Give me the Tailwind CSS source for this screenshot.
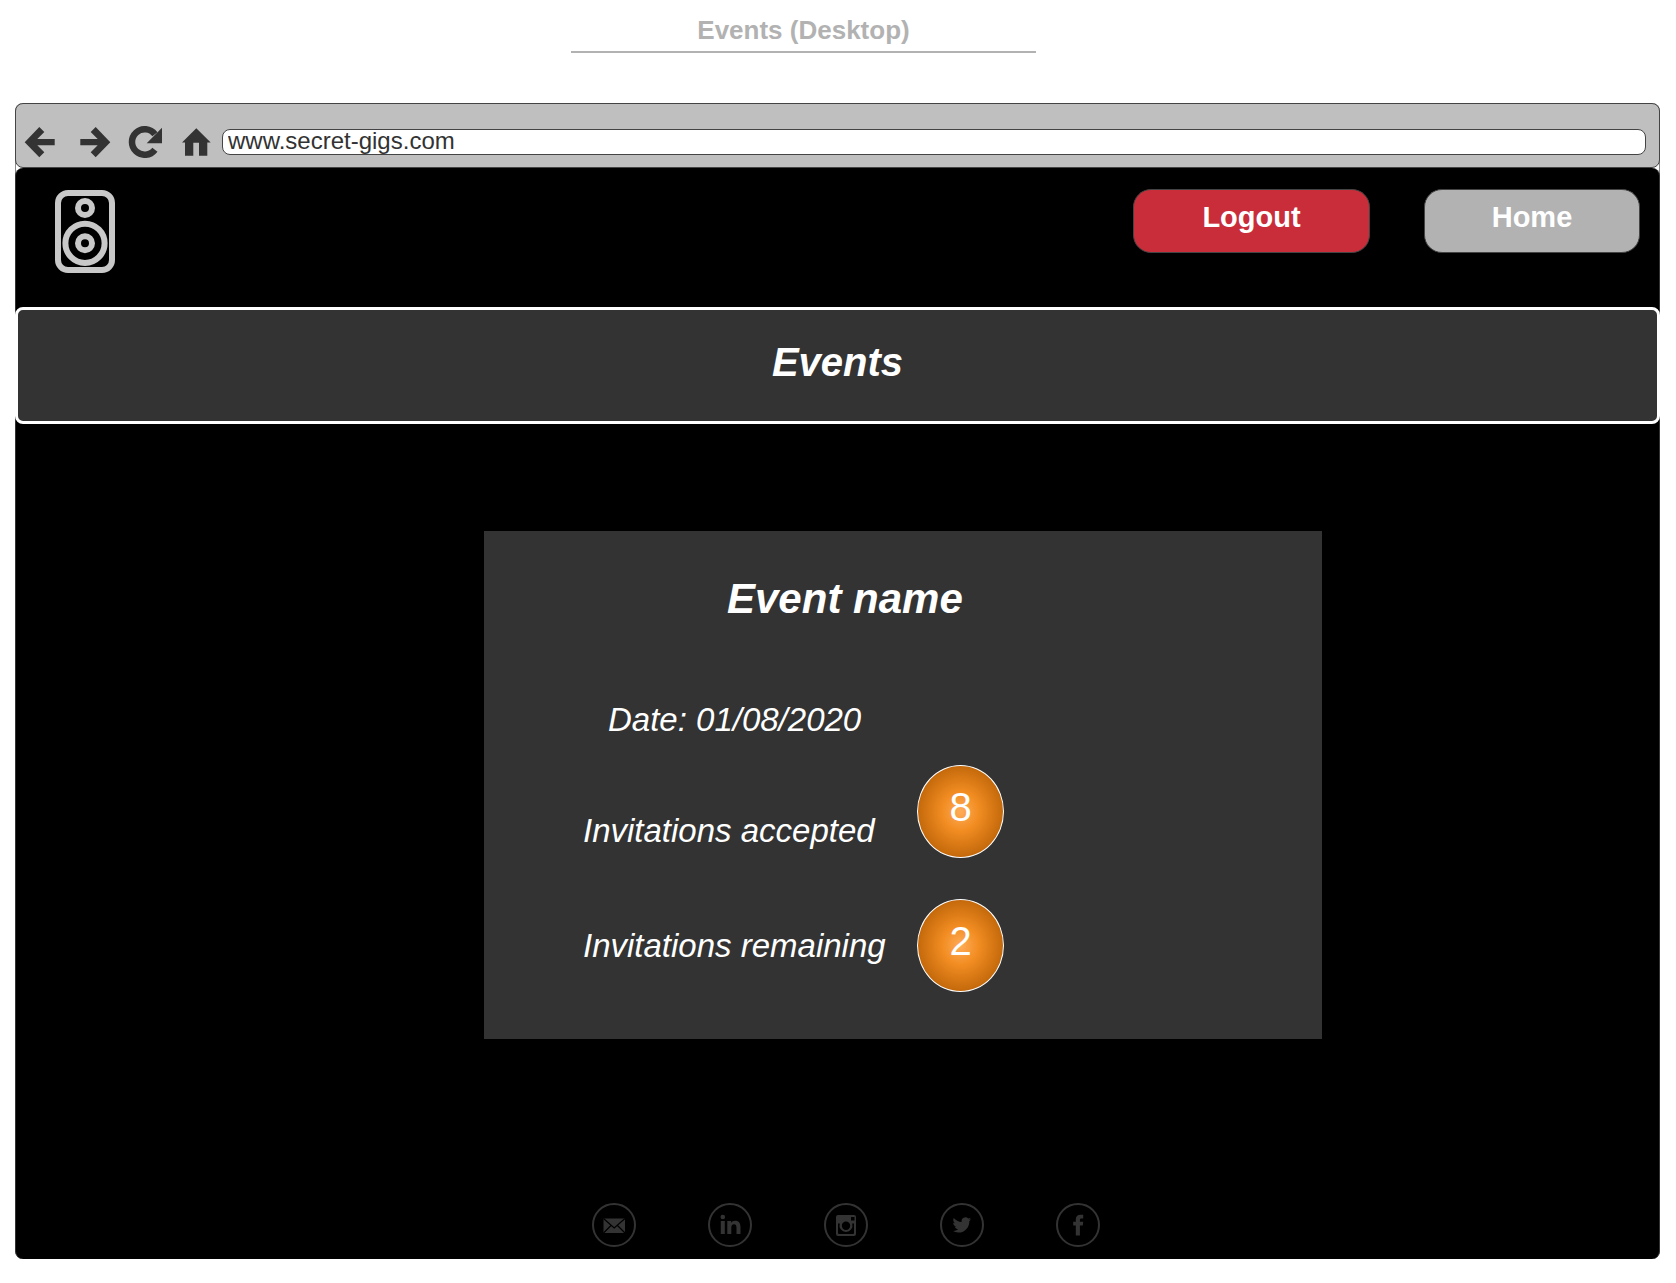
<!DOCTYPE html>
<html lang="en">
<head>
<meta charset="utf-8">
<meta name="viewport" content="width=device-width, initial-scale=1">
<title>Events (Desktop)</title>
<script src="https://cdn.jsdelivr.net/npm/@tailwindcss/browser@4"></script>
</head>
<body class="min-h-screen bg-white pb-[23px] font-['Liberation_Sans',Arial,sans-serif]">
<header class="grid grid-cols-[571fr_465fr_640fr] pt-[14px]">
  <h1 class="col-start-2 border-b-2 border-[#b2b2b2] pb-[5px] text-center text-[26px] leading-8 font-bold whitespace-nowrap text-[#b2b2b2]">Events (Desktop)</h1>
</header>

<div class="mt-[50px] mr-4 ml-[15px] rounded-lg shadow-[inset_1px_0_#888,inset_-1px_0_#888]">
  <!-- Browser toolbar -->
  <div class="flex h-[65px] items-center rounded-lg border border-[#444] bg-[#bfbfbf] pt-[13px] pr-[13px] pl-2 text-[#333]">
    <div class="flex shrink-0 gap-4">
      <button type="button" aria-label="Back"><svg class="block h-8 w-9" viewBox="0 0 36 32" fill="currentColor"><path d="M.7 16.2 15.3 1l5 5-7 7H30.7v6.2H13.3l7 7.1-5 5z"/></svg></button>
      <button type="button" aria-label="Forward"><svg class="block h-8 w-9" viewBox="0 0 36 32" fill="currentColor"><path d="M34.3 16.2 19.7 1l-5 5 7 7H4.3v6.2h17.4l-7 7.1 5 5z"/></svg></button>
      <button type="button" aria-label="Reload"><svg class="block h-8 w-9" viewBox="0 0 36 32" fill="currentColor"><path d="M26.9 8.3A12.75 12.75 0 1 0 26.9 23.7" fill="none" stroke="currentColor" stroke-width="6.5"/><path d="M34 1.7v15.6H18.7z"/></svg></button>
      <button type="button" aria-label="Home page"><svg class="block h-8 w-9" viewBox="0 0 36 32" fill="currentColor"><path d="M16.3 2.3 30.7 16.5h-3.4v13.3H19V16.7h-5.7v13.1H5V16.5H2z"/></svg></button>
    </div>
    <input type="text" aria-label="Address" value="www.secret-gigs.com" class="ml-1.5 h-[26px] min-w-0 flex-1 rounded-lg border border-[#444] bg-white px-[5px] pb-0.5 text-[24px] leading-5 text-[#333] outline-none">
  </div>

  <!-- Page -->
  <div class="rounded-lg border-x border-[#333] bg-black text-white">
    <nav class="flex h-[139px] items-start justify-between pt-[21px] pr-[19px] pl-[39px]">
      <a href="#" aria-label="Secret Gigs" class="pt-px">
        <svg class="block h-[83px] w-[60px]" viewBox="0 0 60 83" fill="none" stroke="#c8c8c8" stroke-width="6"><rect x="3" y="3" width="54" height="77" rx="10"/><circle cx="30" cy="18" r="7"/><circle cx="30" cy="53.3" r="19.6"/><circle cx="30" cy="53.3" r="7"/></svg>
      </a>
      <div class="flex gap-[54px] text-[29px] leading-8 font-bold">
        <button type="button" class="h-16 w-[237px] rounded-[18px] border border-[#444] bg-[#c92d39] pb-2">Logout</button>
        <button type="button" class="h-16 w-[216px] rounded-[18px] border border-[#444] bg-[#b2b2b2] pb-2">Home</button>
      </div>
    </nav>

    <div class="-mx-px flex h-[117px] items-center justify-center rounded-lg border-3 border-white bg-[#333] pb-2">
      <h2 class="text-[40px] leading-12 font-bold italic">Events</h2>
    </div>

    <main class="grid grid-cols-[468fr_838fr_337fr] pt-[107px]">
      <section class="col-start-2 bg-[#333] pt-11 pb-[47px] pl-[99px] whitespace-nowrap">
        <h3 class="pl-[144px] text-[42px] leading-12 font-bold italic">Event name</h3>
        <p class="mt-[77px] pl-[25px] text-[33px] leading-10 italic">Date: 01/08/2020</p>
        <dl class="mt-[25px] flex flex-col gap-[41px]">
          <div class="flex items-end">
            <dt class="w-[334px] pb-[7px] text-[33px] leading-10 italic">Invitations accepted</dt>
            <dd class="flex h-[93px] w-[87px] items-center justify-center rounded-[50%] border border-white bg-[radial-gradient(farthest-side,#ffac59_0%,#f28d22_42%,#c4690b_100%)] pb-[9px] text-[40px] leading-12">8</dd>
          </div>
          <div class="flex items-center">
            <dt class="w-[334px] text-[33px] leading-10 italic">Invitations remaining</dt>
            <dd class="flex h-[93px] w-[87px] items-center justify-center rounded-[50%] border border-white bg-[radial-gradient(farthest-side,#ffac59_0%,#f28d22_42%,#c4690b_100%)] pb-[9px] text-[40px] leading-12">2</dd>
          </div>
        </dl>
      </section>
    </main>

    <footer class="flex justify-center gap-[72px] pt-[164px] pb-3 pl-4 text-[#333]">
      <a href="#" aria-label="Email"><svg class="block size-11" viewBox="0 0 44 44" fill="currentColor"><circle cx="22" cy="22" r="21" fill="none" stroke="currentColor" stroke-width="2"/><path d="M11.5 15.5h21.500v14.500H11.500z"/><path d="M11.500 15.500 22.200 25 33 15.500M11.500 30l7.500-7.500M33 30l-7.500-7.500" fill="none" stroke="#000" stroke-width="1.200"/></svg></a>
      <a href="#" aria-label="LinkedIn"><svg class="block size-11" viewBox="0 0 44 44" fill="currentColor"><circle cx="22" cy="22" r="21" fill="none" stroke="currentColor" stroke-width="2"/><circle cx="14.800" cy="14" r="2.300"/><path d="M12.800 18h4v13h-4zM19.300 18h3.800v1.800c.8-1.400 2.200-2.100 4-2.100 4 0 5.400 2.500 5.400 6.300v7h-4v-6.200c0-2-.5-3.600-2.500-3.600s-2.700 1.500-2.700 3.500V31h-4z"/></svg></a>
      <a href="#" aria-label="Instagram"><svg class="block size-11" viewBox="0 0 44 44" fill="currentColor"><circle cx="22" cy="22" r="21" fill="none" stroke="currentColor" stroke-width="2"/><path fill-rule="evenodd" d="M14 12h16a2 2 0 0 1 2 2v17a2 2 0 0 1-2 2H14a2 2 0 0 1-2-2V14a2 2 0 0 1 2-2zM14 20.500V30a1 1 0 0 0 1 1h14a1 1 0 0 0 1-1v-9.500h-1.800a6.500 6.500 0 1 1-12.400 0zM27 14v3.500h3.500V14zM22 18.500a4.200 4.200 0 1 0 0 8.400 4.200 4.200 0 0 0 0-8.400z"/></svg></a>
      <a href="#" aria-label="Twitter"><svg class="block size-11" viewBox="0 0 44 44" fill="currentColor"><circle cx="22" cy="22" r="21" fill="none" stroke="currentColor" stroke-width="2"/><path transform="translate(12.500 12.600) scale(.78)" d="M23.950 4.570a10 10 0 0 1-2.820.78 4.960 4.960 0 0 0 2.160-2.730c-.95.560-2 .96-3.130 1.190a4.920 4.920 0 0 0-8.380 4.480C7.690 8.100 4.070 6.130 1.640 3.160a4.800 4.800 0 0 0-.67 2.480c0 1.710.87 3.210 2.190 4.100a4.900 4.900 0 0 1-2.230-.62v.06a4.920 4.920 0 0 0 3.950 4.830 5 5 0 0 1-2.210.08 4.940 4.940 0 0 0 4.600 3.420A9.870 9.870 0 0 1 0 19.540a13.990 13.990 0 0 0 7.550 2.210c9.050 0 14-7.500 14-13.980 0-.21 0-.42-.02-.63a9.940 9.940 0 0 0 2.460-2.550z"/></svg></a>
      <a href="#" aria-label="Facebook"><svg class="block size-11" viewBox="0 0 44 44" fill="currentColor"><circle cx="22" cy="22" r="21" fill="none" stroke="currentColor" stroke-width="2"/><path d="M19.800 32.500V22.500h-2.600v-3.700h2.600v-2.200c0-3.200 1.600-4.800 4.700-4.800h2.700v3.600h-1.800c-1.200 0-1.500.6-1.500 1.600v1.800h3.300l-.4 3.700h-2.900v10z"/></svg></a>
    </footer>
  </div>
</div>
</body>
</html>
